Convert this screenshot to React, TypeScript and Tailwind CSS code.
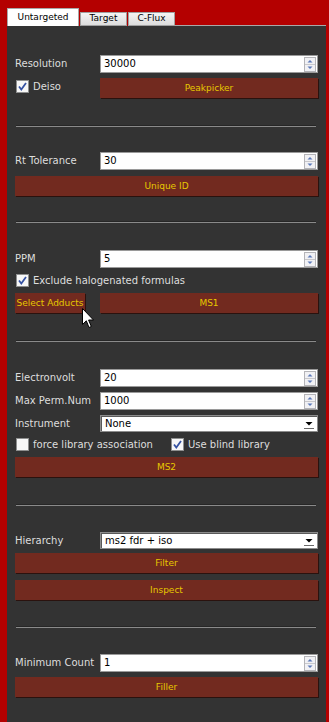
import React from 'react';

const LABEL = 'text-[10px] text-[#dedede] leading-none';

function Spin({ value }: { value: string }) {
  return (
    <div className="flex-1 h-[18px] bg-white border border-[#9a9a9a] flex items-center pl-[3px] pr-[1px]">
      <span className="flex-1 text-[10px] text-black leading-none">{value}</span>
      <svg width="12" height="15" viewBox="0 0 12 15">
        <rect x="0.5" y="0.5" width="11" height="14" fill="#f1f1f4" stroke="#b4b4b8" />
        <line x1="1" y1="7.5" x2="11" y2="7.5" stroke="#c8c8cc" />
        <path d="M3.5 5.5 L6 3 L8.5 5.5 Z" fill="#5b79b8" />
        <path d="M3.5 9.5 L6 12 L8.5 9.5 Z" fill="#5b79b8" />
      </svg>
    </div>
  );
}

function Combo({ value }: { value: string }) {
  return (
    <div className="flex-1 h-[17px] bg-white border border-[#8c8c8c] shadow-[inset_1px_1px_0_#5a5a5a] flex items-center pl-[4px] pr-[3px]">
      <span className="flex-1 text-[10px] text-black leading-none">{value}</span>
      <svg width="10" height="10" viewBox="0 0 10 10">
        <path d="M1.5 3 L8.5 3 L5 6.5 Z" fill="#000" />
        <line x1="0" y1="9.5" x2="10" y2="9.5" stroke="#6a6a6a" />
      </svg>
    </div>
  );
}

function Btn({ children, className = '' }: { children: React.ReactNode; className?: string }) {
  return (
    <div className={`relative h-[20px] bg-[#722a1f] shadow-[1px_1px_0_#2a120e] flex items-center justify-center text-[9px] text-[#e6c800] leading-none ${className}`}>
      {children}
    </div>
  );
}

function Check({ checked, label }: { checked: boolean; label: string }) {
  return (
    <div className="flex items-center gap-[4px]">
      <svg width="13" height="13" viewBox="0 0 13 13">
        <rect x="0.5" y="0.5" width="12" height="12" fill="#f7f7f7" stroke="#8e8f8f" />
        {checked && <path d="M3 6.5 L5.3 9.5 L10 3" fill="none" stroke="#3552a3" strokeWidth="1.8" />}
      </svg>
      <span className={LABEL}>{label}</span>
    </div>
  );
}

function Row({ label, children }: { label: string; children: React.ReactNode }) {
  return (
    <div className="flex items-center">
      <span className={`w-[85px] ${LABEL}`}>{label}</span>
      {children}
    </div>
  );
}

function Sep({ top, bottom }: { top: string; bottom: string }) {
  return (
    <div className={`${top} ${bottom} ml-[1px] mr-[2px] h-[2px] border-t border-[#262626] bg-[#8a8a8a]`} />
  );
}

function Cursor() {
  return (
    <svg className="absolute left-[67px] top-[15px]" width="13" height="21" viewBox="0 0 13 21">
      <path d="M0.5 0.5 L0.5 16.5 L4.3 12.8 L7 19.5 L9.3 18.5 L6.6 12 L11.5 12 Z" fill="#fff" stroke="#000" strokeWidth="1" />
    </svg>
  );
}

export default function App() {
  return (
    <div className="w-[329px] h-[722px] bg-[#b40000] pl-[7px] pr-[3px] pt-[8px] flex flex-col font-['DejaVu_Sans',sans-serif] overflow-hidden">
      {/* Tabs */}
      <div className="flex items-end h-[18px]">
        <div className="w-[72px] h-[18px] bg-white border border-b-0 border-[#a8a8a8] flex items-center justify-center text-[9px] text-black">Untargeted</div>
        <div className="ml-[1px] w-[47px] h-[14px] bg-gradient-to-b from-[#f4f4f4] to-[#dddddd] border border-[#a0a0a0] flex items-center justify-center text-[9px] text-black">Target</div>
        <div className="ml-[1px] w-[47px] h-[14px] bg-gradient-to-b from-[#f4f4f4] to-[#dddddd] border border-[#a0a0a0] flex items-center justify-center text-[9px] text-black">C-Flux</div>
        <div className="flex-1 h-[1px] bg-[#a8a8a8]" />
      </div>

      <div className="flex-1 bg-[#333333] px-[8px] pt-[29px] flex flex-col">
        {/* Peakpicker */}
        <Row label="Resolution"><Spin value="30000" /></Row>
        <div className="mt-[5px] flex items-start">
          <div className="w-[85px] pt-[2px] pl-[1px]"><Check checked label="Deiso" /></div>
          <Btn className="flex-1">Peakpicker</Btn>
        </div>
        <Sep top="mt-[27px]" bottom="mb-[25px]" />

        {/* Unique ID */}
        <Row label="Rt Tolerance"><Spin value="30" /></Row>
        <Btn className="mt-[6px]">Unique ID</Btn>
        <Sep top="mt-[25px]" bottom="mb-[27px]" />

        {/* MS1 */}
        <Row label="PPM"><Spin value="5" /></Row>
        <div className="mt-[5px] h-[15px] pl-[1px] flex items-center"><Check checked label="Exclude halogenated formulas" /></div>
        <div className="mt-[5px] flex">
          <Btn className="w-[70px]">Select Adducts<Cursor /></Btn>
          <Btn className="ml-[15px] flex-1">MS1</Btn>
        </div>
        <Sep top="mt-[27px]" bottom="mb-[27px]" />

        {/* MS2 */}
        <Row label="Electronvolt"><Spin value="20" /></Row>
        <div className="mt-[5px]"><Row label="Max Perm.Num"><Spin value="1000" /></Row></div>
        <div className="mt-[5px]"><Row label="Instrument"><Combo value="None" /></Row></div>
        <div className="mt-[5px] h-[15px] pl-[1px] flex items-center">
          <div className="w-[155px]"><Check checked={false} label="force library association" /></div>
          <Check checked label="Use blind library" />
        </div>
        <Btn className="mt-[5px]">MS2</Btn>
        <Sep top="mt-[27px]" bottom="mb-[26px]" />

        {/* Filter */}
        <Row label="Hierarchy"><Combo value="ms2 fdr + iso" /></Row>
        <Btn className="mt-[4px]">Filter</Btn>
        <Btn className="mt-[7px]">Inspect</Btn>
        <Sep top="mt-[26px]" bottom="mb-[26px]" />

        {/* Filler */}
        <Row label="Minimum Count"><Spin value="1" /></Row>
        <Btn className="mt-[5px]">Filler</Btn>
      </div>
    </div>
  );
}
